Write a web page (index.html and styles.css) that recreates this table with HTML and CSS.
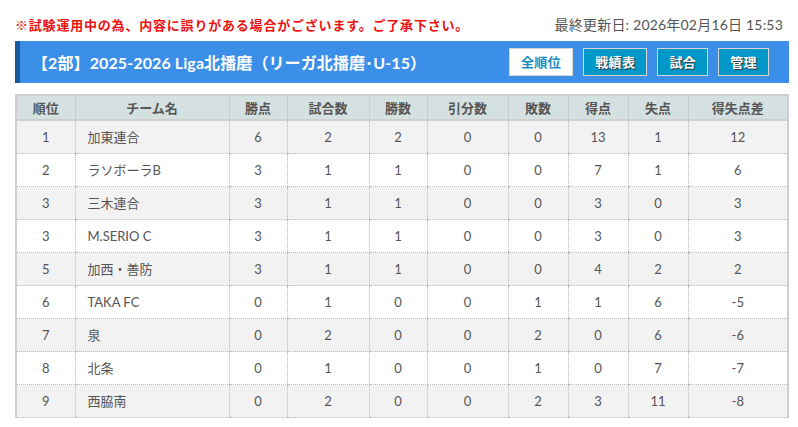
FILE: index.html
```html
<!DOCTYPE html>
<html lang="ja">
<head>
<meta charset="utf-8">
<link rel="stylesheet" href="styles.css">
</head>
<body>
<div class="page">
  <div class="topline">
    <span class="notice">※試験運用中の為、内容に誤りがある場合がございます。ご了承下さい。</span>
    <span class="updated">最終更新日: 2026年02月16日 15:53</span>
  </div>
  <div class="titlebar">
    <h1 class="title">【2部】2025-2026 Liga北播磨（リーガ北播磨･U-15）</h1>
    <nav class="btns">
      <a class="btn active">全順位</a>
      <a class="btn">戦績表</a>
      <a class="btn">試合</a>
      <a class="btn">管理</a>
    </nav>
  </div>
  <table class="standings">
    <colgroup>
      <col style="width:59px"><col style="width:154px"><col style="width:58px"><col style="width:82px"><col style="width:58px"><col style="width:81px"><col style="width:60px"><col style="width:60px"><col style="width:60px"><col>
    </colgroup>
    <thead>
      <tr><th>順位</th><th>チーム名</th><th>勝点</th><th>試合数</th><th>勝数</th><th>引分数</th><th>敗数</th><th>得点</th><th>失点</th><th>得失点差</th></tr>
    </thead>
    <tbody>
      <tr><td>1</td><td class="team">加東連合</td><td>6</td><td>2</td><td>2</td><td>0</td><td>0</td><td>13</td><td>1</td><td>12</td></tr>
      <tr><td>2</td><td class="team">ラソボーラB</td><td>3</td><td>1</td><td>1</td><td>0</td><td>0</td><td>7</td><td>1</td><td>6</td></tr>
      <tr><td>3</td><td class="team">三木連合</td><td>3</td><td>1</td><td>1</td><td>0</td><td>0</td><td>3</td><td>0</td><td>3</td></tr>
      <tr><td>3</td><td class="team">M.SERIO C</td><td>3</td><td>1</td><td>1</td><td>0</td><td>0</td><td>3</td><td>0</td><td>3</td></tr>
      <tr><td>5</td><td class="team">加西・善防</td><td>3</td><td>1</td><td>1</td><td>0</td><td>0</td><td>4</td><td>2</td><td>2</td></tr>
      <tr><td>6</td><td class="team">TAKA FC</td><td>0</td><td>1</td><td>0</td><td>0</td><td>1</td><td>1</td><td>6</td><td>-5</td></tr>
      <tr><td>7</td><td class="team">泉</td><td>0</td><td>2</td><td>0</td><td>0</td><td>2</td><td>0</td><td>6</td><td>-6</td></tr>
      <tr><td>8</td><td class="team">北条</td><td>0</td><td>1</td><td>0</td><td>0</td><td>1</td><td>0</td><td>7</td><td>-7</td></tr>
      <tr><td>9</td><td class="team">西脇南</td><td>0</td><td>2</td><td>0</td><td>0</td><td>2</td><td>3</td><td>11</td><td>-8</td></tr>
    </tbody>
  </table>
</div>
</body>
</html>
```
FILE: styles.css
```css
html, body {
  margin: 0;
  padding: 0;
  background: #fff;
}
body {
  font-family: Lato, "Noto Sans CJK JP", sans-serif;
  color: #555;
}
.page {
  padding: 14px 9px 0 15px;
}
.topline {
  display: flex;
  justify-content: space-between;
  align-items: center;
  height: 20px;
  padding-right: 6px;
}
.notice {
  color: #ee1111;
  font-weight: bold;
  font-size: 13px;
  letter-spacing: 0.8px;
}
.updated {
  color: #555;
  font-size: 14px;
  letter-spacing: 0.2px;
}
.titlebar {
  margin-top: 7px;
  height: 42px;
  background: #3b8fe8;
  border-left: 5px solid #17599b;
  display: flex;
  align-items: center;
  justify-content: space-between;
  padding: 0 20px 0 12px;
}
.title {
  margin: 0;
  color: #fff;
  font-size: 16px;
  font-weight: bold;
  letter-spacing: 0.1px;
}
.btns {
  display: flex;
  gap: 10px;
}
.btn {
  display: block;
  height: 26px;
  line-height: 26px;
  padding: 0 11px;
  border: 1px solid #d6d6d6;
  background: #0098c8;
  color: #fff;
  font-size: 13px;
  font-weight: bold;
  text-shadow: 1px 1px 1px #333;
  letter-spacing: 0.4px;
}
.btn.active {
  background: #fff;
  color: #1a8cc4;
  text-shadow: none;
}
.standings {
  margin-top: 11px;
  width: 774px;
  border-collapse: collapse;
  table-layout: fixed;
  font-size: 13px;
  border-left: 2px solid #cfcfcf;
  border-right: 2px solid #cfcfcf;
  border-top: 2px solid #cfcfcf;
}
.standings th {
  background: #d5e1e1;
  height: 23px;
  line-height: 18px;
  font-weight: bold;
  color: #555;
  border-left: 1px dotted #bbb;
  border-bottom: 2px solid #cfcfcf;
  padding: 0;
}
.standings td {
  height: 32px;
  line-height: 18px;
  text-align: center;
  padding: 0;
  border-left: 1px dotted #bbb;
  border-bottom: 1px dotted #bbb;
  color: #555;
}
.standings th:first-child, .standings td:first-child {
  border-left: none;
}
.standings td.team {
  text-align: left;
  padding-left: 12px;
}
.standings tbody tr:nth-child(odd) td {
  background: #f2f2f2;
}
```
